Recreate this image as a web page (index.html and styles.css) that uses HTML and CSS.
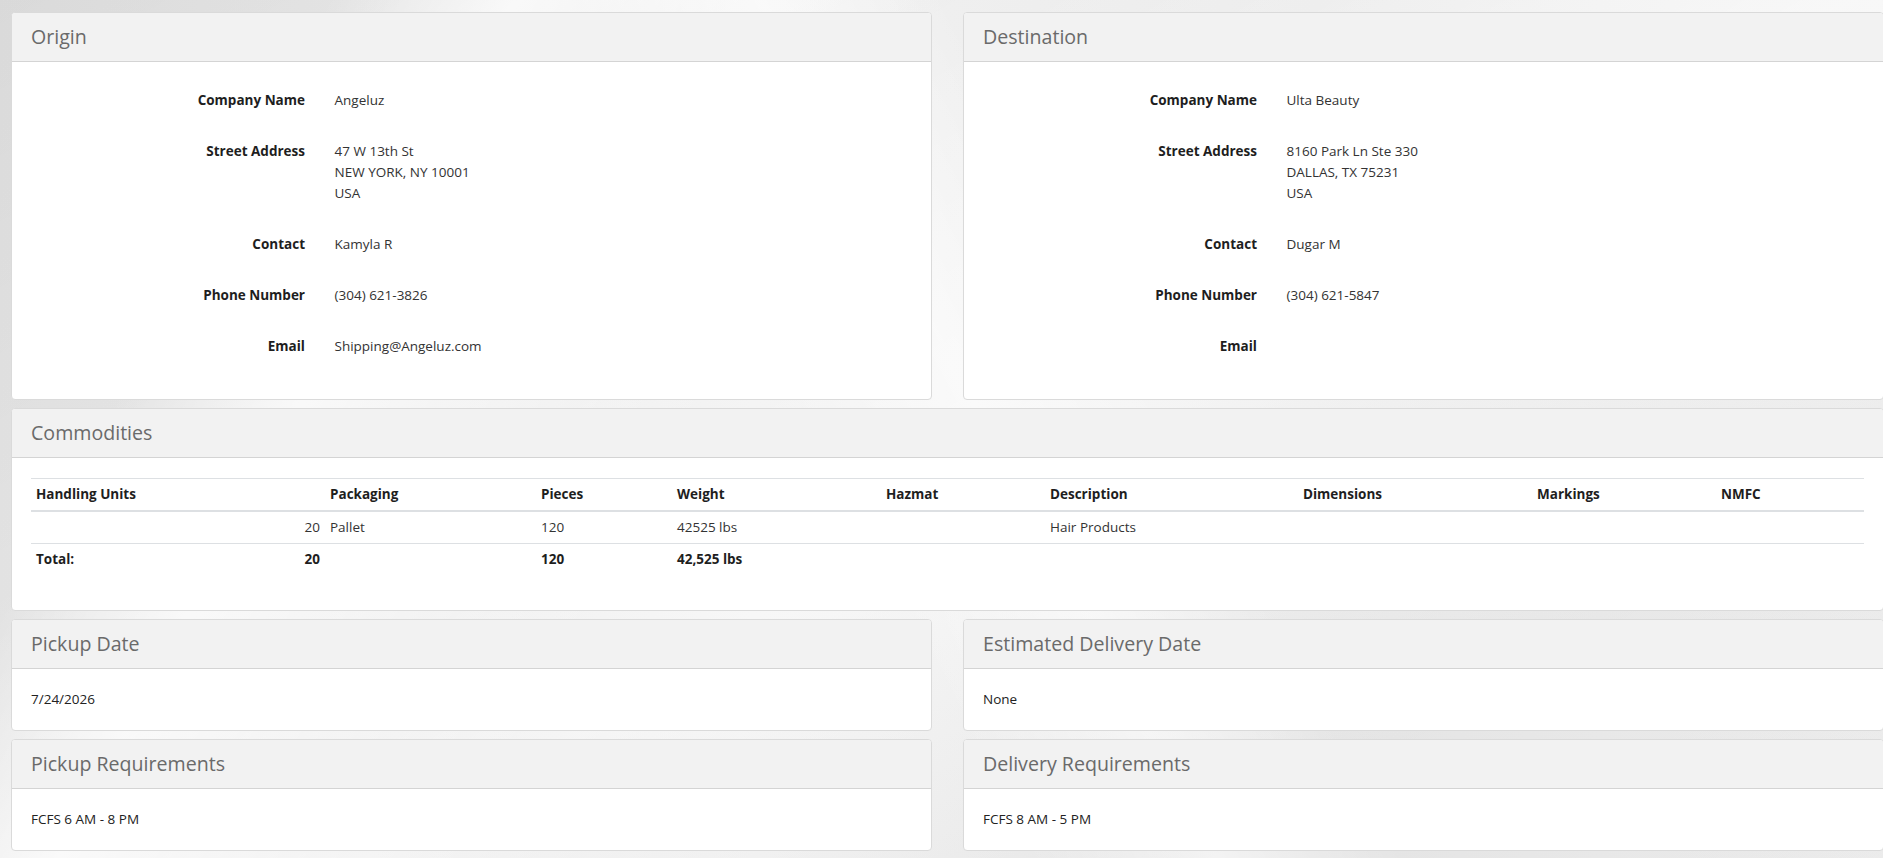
FILE: index.html
```html
<!DOCTYPE html>
<html lang="en">
<head>
<meta charset="utf-8">
<title>Shipment Details</title>
<link rel="stylesheet" href="styles.css">
</head>
<body>
<div class="page">
  <div class="pair">
    <section class="panel">
      <header class="panel-head"><h2 class="panel-title">Origin</h2></header>
      <div class="panel-body form-body">
        <div class="form-row"><div class="label">Company Name</div><div class="value">Angeluz</div></div>
        <div class="form-row"><div class="label">Street Address</div><div class="value">47 W 13th St<br>NEW YORK, NY 10001<br>USA</div></div>
        <div class="form-row"><div class="label">Contact</div><div class="value">Kamyla R</div></div>
        <div class="form-row"><div class="label">Phone Number</div><div class="value">(304) 621-3826</div></div>
        <div class="form-row"><div class="label">Email</div><div class="value">Shipping@Angeluz.com</div></div>
      </div>
    </section>
    <section class="panel">
      <header class="panel-head"><h2 class="panel-title">Destination</h2></header>
      <div class="panel-body form-body">
        <div class="form-row"><div class="label">Company Name</div><div class="value">Ulta Beauty</div></div>
        <div class="form-row"><div class="label">Street Address</div><div class="value">8160 Park Ln Ste 330<br>DALLAS, TX 75231<br>USA</div></div>
        <div class="form-row"><div class="label">Contact</div><div class="value">Dugar M</div></div>
        <div class="form-row"><div class="label">Phone Number</div><div class="value">(304) 621-5847</div></div>
        <div class="form-row"><div class="label">Email</div><div class="value"></div></div>
      </div>
    </section>
  </div>

  <section class="panel">
    <header class="panel-head"><h2 class="panel-title">Commodities</h2></header>
    <div class="panel-body table-body">
      <table class="grid-table">
        <colgroup>
          <col class="c1"><col class="c2"><col class="c3"><col class="c4"><col class="c5"><col class="c6"><col class="c7"><col class="c8"><col class="c9">
        </colgroup>
        <thead>
          <tr><th>Handling Units</th><th>Packaging</th><th>Pieces</th><th>Weight</th><th>Hazmat</th><th>Description</th><th>Dimensions</th><th>Markings</th><th>NMFC</th></tr>
        </thead>
        <tbody>
          <tr><td class="num">20</td><td>Pallet</td><td>120</td><td>42525 lbs</td><td></td><td>Hair Products</td><td></td><td></td><td></td></tr>
          <tr class="total"><td><span class="split"><span>Total:</span><span>20</span></span></td><td></td><td>120</td><td>42,525 lbs</td><td></td><td></td><td></td><td></td><td></td></tr>
        </tbody>
      </table>
    </div>
  </section>

  <div class="pair">
    <section class="panel">
      <header class="panel-head"><h2 class="panel-title">Pickup Date</h2></header>
      <div class="panel-body text-body">7/24/2026</div>
    </section>
    <section class="panel">
      <header class="panel-head"><h2 class="panel-title">Estimated Delivery Date</h2></header>
      <div class="panel-body text-body">None</div>
    </section>
  </div>

  <div class="pair">
    <section class="panel">
      <header class="panel-head"><h2 class="panel-title">Pickup Requirements</h2></header>
      <div class="panel-body text-body">FCFS 6 AM - 8 PM</div>
    </section>
    <section class="panel">
      <header class="panel-head"><h2 class="panel-title">Delivery Requirements</h2></header>
      <div class="panel-body text-body">FCFS 8 AM - 5 PM</div>
    </section>
  </div>
</div>
</body>
</html>
```

FILE: styles.css
```css
html, body {
  margin: 0;
  height: 100%;
  overflow: hidden;
}

body {
  font-family: "Open Sans", "Noto Sans", "Liberation Sans", sans-serif;
  font-size: 13.5px;
  line-height: 20.8px;
  color: #333;
  background-color: #e9e9e9;
  background-image:
    linear-gradient(118deg, rgba(255,255,255,0) 14%, rgba(255,255,255,0.75) 22%, rgba(255,255,255,0.2) 34%, rgba(255,255,255,0) 40%),
    linear-gradient(62deg, rgba(255,255,255,0) 44%, rgba(255,255,255,0.55) 52%, rgba(255,255,255,0) 60%),
    linear-gradient(150deg, rgba(0,0,0,0.04) 0%, rgba(0,0,0,0) 30%, rgba(255,255,255,0.45) 55%, rgba(0,0,0,0.03) 80%),
    linear-gradient(90deg, #e2e2e2 0%, #f1f1f1 40%, #ebebeb 70%, #f3f3f3 100%);
}

.page {
  width: 1873px;
  padding: 12px 0 0 11px;
  display: flex;
  flex-direction: column;
  gap: 8px;
}

.pair {
  display: grid;
  grid-template-columns: 921px 921px;
  column-gap: 31px;
}

.panel {
  background: #fff;
  border: 1px solid #dadada;
  border-radius: 4px;
  box-sizing: border-box;
}

.panel-head {
  height: 49px;
  box-sizing: border-box;
  padding: 10px 19px;
  background: #f2f2f2;
  border-bottom: 1px solid #d4d4d4;
  border-radius: 3px 3px 0 0;
}

.panel-title {
  margin: 0;
  font-size: 19.6px;
  line-height: 28px;
  font-weight: 400;
  color: #6a6a6a;
}

.panel-body {
  box-sizing: border-box;
  padding: 0 19px;
}

.form-body {
  height: 337px;
  padding-top: 28px;
  display: flex;
  flex-direction: column;
  gap: 30.2px;
}

.form-row {
  display: grid;
  grid-template-columns: 274px 1fr;
  column-gap: 29.5px;
}

.label {
  text-align: right;
  font-weight: 700;
  color: #1e1e1e;
}

.value {
  color: #333;
}

.table-body {
  height: 152px;
  padding-top: 20px;
}

.grid-table {
  width: 1833px;
  table-layout: fixed;
  border-collapse: collapse;
  border-top: 1px solid #dde0e3;
}

.c1 { width: 294px; }
.c2 { width: 211px; }
.c3 { width: 136px; }
.c4 { width: 209px; }
.c5 { width: 164px; }
.c6 { width: 253px; }
.c7 { width: 234px; }
.c8 { width: 184px; }
.c9 { width: 148px; }

.grid-table th,
.grid-table td {
  padding: 5px 5px;
  text-align: left;
  vertical-align: top;
  line-height: 20.8px;
}

.grid-table th {
  font-weight: 700;
  color: #1e1e1e;
  border-bottom: 2px solid #dde0e3;
}

.grid-table tbody tr:first-child td {
  border-bottom: 1px solid #dde0e3;
}

.grid-table td.num {
  text-align: right;
}

.total td {
  font-weight: 700;
  color: #1e1e1e;
}

.split {
  display: flex;
  justify-content: space-between;
}

.text-body {
  height: 61px;
  padding-top: 20px;
  color: #222;
}
```
